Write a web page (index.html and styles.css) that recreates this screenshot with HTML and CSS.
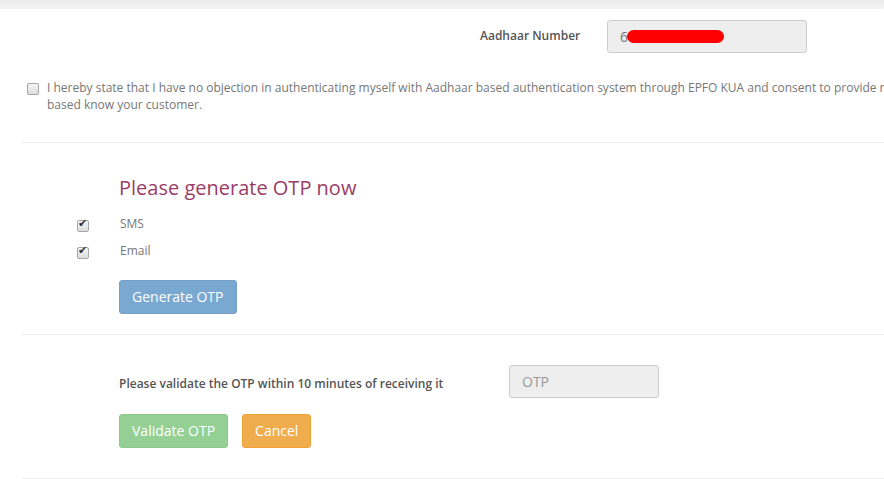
FILE: index.html
```html
<!DOCTYPE html>
<html lang="en">
<head>
    <meta charset="UTF-8">
    <title>Aadhaar KYC - OTP</title>
    <link rel="stylesheet" href="styles.css">
</head>
<body>

<div class="top-bar"></div>

<div class="aadhaar-row">
    <label class="field-label" for="aadhaar">Aadhaar Number</label>
    <div class="field-box" id="aadhaar">
        <span>6</span><span class="masked"></span>
    </div>
</div>

<div class="consent">
    <input type="checkbox" class="chk" id="consent">
    <label for="consent">I hereby state that I have no objection in authenticating myself with Aadhaar based authentication system through EPFO KUA and consent to provide my Aadhaar Number and One Time Password (OTP) data for Aadhaar based know your customer.</label>
</div>

<div class="section">
    <h3 class="otp-title">Please generate OTP now</h3>
    <div class="check-row">
        <input type="checkbox" class="chk" id="sms" checked>
        <label for="sms">SMS</label>
    </div>
    <div class="check-row">
        <input type="checkbox" class="chk" id="email" checked>
        <label for="email">Email</label>
    </div>
    <button class="btn btn-primary" disabled>Generate OTP</button>
</div>

<div class="section section-validate">
    <div class="validate-row">
        <span class="field-label">Please validate the OTP within 10 minutes of receiving it</span>
        <input type="text" class="otp-input" placeholder="OTP">
    </div>
    <div class="btn-row">
        <button class="btn btn-success" disabled>Validate OTP</button>
        <button class="btn btn-warning">Cancel</button>
    </div>
</div>

<div class="section"></div>

</body>
</html>
```

FILE: styles.css
```css
body {
    margin: 0;
    font-family: 'Open Sans', Arial, sans-serif;
    font-size: 12px;
    color: #777;
    background: #fff;
    overflow: hidden;
    width: 884px;
}
.top-bar {
    height: 9px;
    background: linear-gradient(#ececec, #f4f4f4);
}
.aadhaar-row {
    display: flex;
    align-items: center;
    margin-top: 11px;
    padding-left: 480px;
}
.field-label {
    font-weight: 600;
    color: #555;
}
.aadhaar-row .field-label {
    width: 127px;
    margin-top: -2px;
}
.field-box {
    box-sizing: border-box;
    width: 200px;
    height: 33px;
    padding: 0 12px;
    display: flex;
    align-items: center;
    background: #eee;
    border: 1px solid #ccc;
    border-radius: 3px;
    color: #777;
    font-size: 14px;
}
.masked {
    display: inline-block;
    width: 97px;
    height: 13px;
    margin-left: -1px;
    background: #f00;
    border-radius: 7px;
}
/* grey windows-style checkboxes */
.chk {
    appearance: none;
    -webkit-appearance: none;
    box-sizing: border-box;
    width: 12px;
    height: 12px;
    margin: 0;
    position: relative;
    flex-shrink: 0;
    border: 1px solid #a6a6a6;
    border-radius: 2px;
    background: linear-gradient(#f4f4f4, #dedede);
}
.chk:checked::after {
    content: "\2714";
    position: absolute;
    left: 0;
    top: -4px;
    font-family: 'DejaVu Sans', sans-serif;
    font-size: 11px;
    color: #333;
}
.consent {
    display: flex;
    align-items: flex-start;
    margin-top: 26px;
    padding-left: 27px;
}
.consent .chk {
    margin: 4px 8px 0 0;
}
.consent label {
    line-height: 17px;
    width: 1225px;
    flex-shrink: 0;
}
.section {
    margin-left: 22px;
    border-top: 1px solid #eee;
    padding-left: 97px;
}
.consent + .section {
    margin-top: 29px;
}
.otp-title {
    margin: 34px 0 12px;
    font-size: 20px;
    font-weight: 500;
    color: #993d66;
    line-height: 22px;
}
.check-row {
    display: flex;
    align-items: center;
    height: 27px;
    margin-left: -43px;
}
.check-row .chk {
    margin: 2px 31px 0 1px;
}
.check-row label {
    margin-top: -3px;
}
.btn {
    font-family: 'Open Sans', Arial, sans-serif;
    font-size: 14px;
    line-height: 20px;
    padding: 6px 12px;
    border: 1px solid transparent;
    border-radius: 3px;
    color: #fff;
}
.btn:disabled {
    opacity: 0.65;
}
.btn-primary {
    background: #337ab7;
    border-color: #2e6da4;
    margin: 15px 0 20px;
}
.btn-success {
    background: #5cb85c;
    border-color: #4cae4c;
}
.btn-warning {
    background: #f0ad4e;
    border-color: #eea236;
}
.section-validate {
    padding-top: 30px;
    padding-bottom: 30px;
}
.validate-row {
    display: flex;
    align-items: center;
}
.validate-row .field-label {
    width: 390px;
    margin-top: 3px;
}
.otp-input {
    box-sizing: border-box;
    width: 150px;
    height: 33px;
    padding: 0 12px;
    font-family: 'Open Sans', Arial, sans-serif;
    font-size: 14px;
    background: #eee;
    border: 1px solid #ccc;
    border-radius: 3px;
}
.otp-input::placeholder {
    color: #999;
}
.btn-row {
    display: flex;
    gap: 14px;
    margin-top: 16px;
}
```
